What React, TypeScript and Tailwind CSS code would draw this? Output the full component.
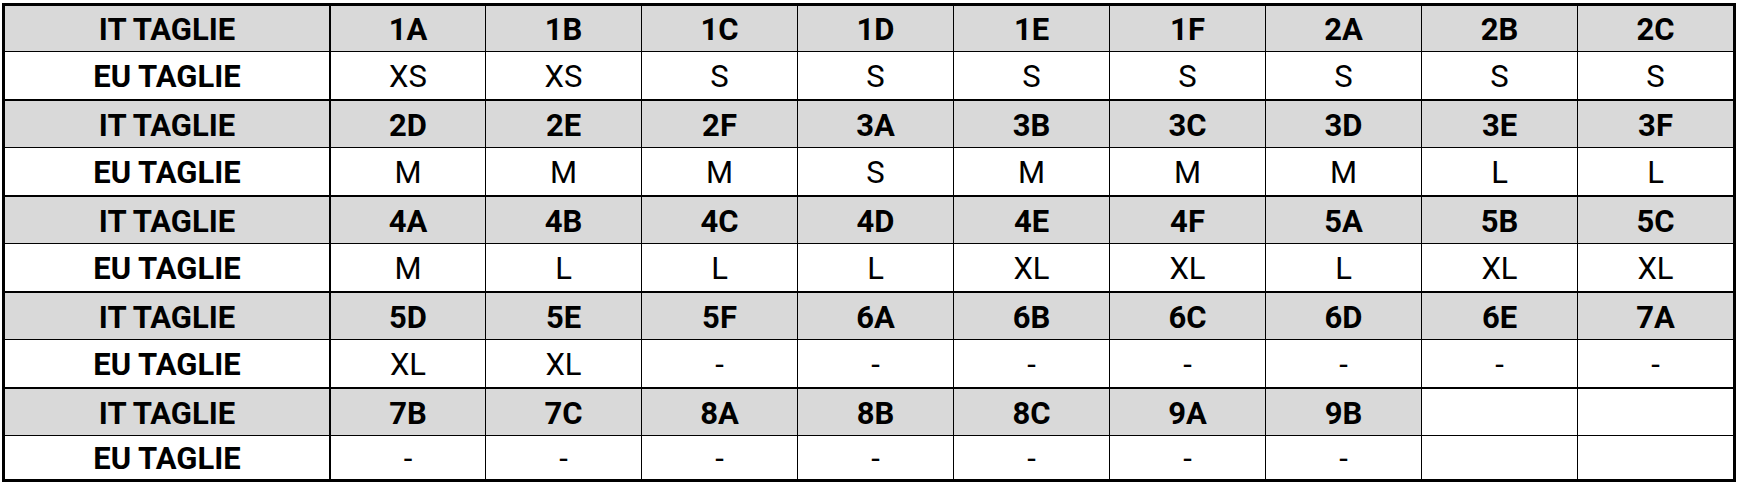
import React from 'react';

type Group = { it: string[]; eu: string[] };

const groups: Group[] = [
  {
    it: ['1A', '1B', '1C', '1D', '1E', '1F', '2A', '2B', '2C'],
    eu: ['XS', 'XS', 'S', 'S', 'S', 'S', 'S', 'S', 'S'],
  },
  {
    it: ['2D', '2E', '2F', '3A', '3B', '3C', '3D', '3E', '3F'],
    eu: ['M', 'M', 'M', 'S', 'M', 'M', 'M', 'L', 'L'],
  },
  {
    it: ['4A', '4B', '4C', '4D', '4E', '4F', '5A', '5B', '5C'],
    eu: ['M', 'L', 'L', 'L', 'XL', 'XL', 'L', 'XL', 'XL'],
  },
  {
    it: ['5D', '5E', '5F', '6A', '6B', '6C', '6D', '6E', '7A'],
    eu: ['XL', 'XL', '-', '-', '-', '-', '-', '-', '-'],
  },
  {
    it: ['7B', '7C', '8A', '8B', '8C', '9A', '9B', '', ''],
    eu: ['-', '-', '-', '-', '-', '-', '-', '', ''],
  },
];

const Row = ({
  label,
  values,
  header,
  rowClass,
}: {
  label: string;
  values: string[];
  header: boolean;
  rowClass: string;
}) => (
  <div className={`grid grid-cols-[324px_repeat(9,minmax(0,1fr))] border-black ${rowClass}`}>
    <div
      className={`flex items-center justify-center pt-[2px] font-bold text-[31px] ${
        header ? 'bg-[#d9d9d9]' : 'bg-white'
      }`}
    >
      {label}
    </div>
    {values.map((v, i) => (
      <div
        key={i}
        className={`flex items-center justify-center pt-[2px] border-black text-[31px] ${
          i === 0 ? 'border-l-2' : 'border-l'
        } ${header && v !== '' ? 'bg-[#d9d9d9] font-bold' : 'bg-white'}`}
      >
        {v}
      </div>
    ))}
  </div>
);

export default function App() {
  return (
    <div className="w-[1737px] h-[484px] bg-white pt-[3px] pl-[2px] text-black font-['Liberation_Sans_Narrow','Roboto',sans-serif] leading-none">
      <div className="w-[1734px] border-[3px] border-black">
        {groups.map((g, gi) => {
          const last = gi === groups.length - 1;
          return (
            <React.Fragment key={gi}>
              <Row
                label="IT TAGLIE"
                values={g.it}
                header
                rowClass={`border-b ${gi === 0 ? 'h-[46px]' : 'h-[47px]'}`}
              />
              <Row
                label="EU TAGLIE"
                values={g.eu}
                header={false}
                rowClass={last ? 'h-[43px]' : 'h-[49px] border-b-2'}
              />
            </React.Fragment>
          );
        })}
      </div>
    </div>
  );
}
